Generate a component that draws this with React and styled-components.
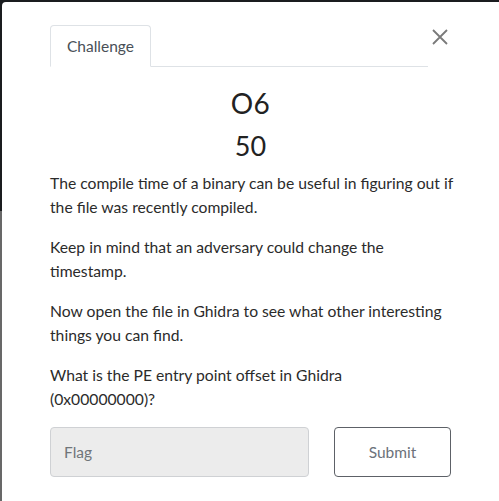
import React from "react";
import styled, { createGlobalStyle } from "styled-components";

const Global = createGlobalStyle`
  html, body { margin: 0; padding: 0; }
  body {
    width: 499px;
    height: 501px;
    overflow: hidden;
    font-family: Lato, "Open Sans", "Liberation Sans", sans-serif;
    background: linear-gradient(to bottom, #1a1c1f 0, #1a1c1f 211px, #686868 211px, #686868 100%);
  }
  * { box-sizing: border-box; }
`;

const Page = styled.div`
  padding: 2px 0 0 2px;
`;

const Modal = styled.div`
  width: 540px;
  height: 520px;
  background: #fff;
  border-radius: 4px 0 0 0;
  padding: 23px 89px 0 48px;
  display: flex;
  flex-direction: column;
`;

const Header = styled.div`
  display: flex;
  align-items: flex-start;
`;

const Tabs = styled.div`
  flex: 0 0 378px;
  display: flex;
  border-bottom: 1px solid #dee2e6;
`;

const Tab = styled.div`
  padding: 8px 16px;
  height: 42px;
  margin-bottom: -1px;
  border: 1px solid #dee2e6;
  border-bottom-color: #fff;
  border-radius: 4px 4px 0 0;
  color: #495057;
  font-size: 15.5px;
  line-height: 24px;
  background: #fff;
`;

const Close = styled.button`
  margin: 4px 0 0 4px;
  width: 16px;
  height: 16px;
  padding: 0;
  border: 0;
  background: none;
  display: flex;
  color: #7a7a7a;
`;

const Title = styled.h2`
  margin: 19px 0 0;
  width: 401px;
  text-align: center;
  font-size: 28px;
  font-weight: 400;
  line-height: 34px;
  color: #222;
  letter-spacing: 0.5px;
`;

const Value = styled.h3`
  margin: 9px 0 0;
  width: 401px;
  text-align: center;
  font-size: 27px;
  font-weight: 400;
  line-height: 34px;
  color: #222;
`;

const Description = styled.div`
  width: 405px;
  margin-top: 8px;
`;

const Para = styled.p`
  margin: 0 0 16px;
  max-width: ${(p) => (p.$narrow ? "398px" : "none")};
  font-size: 15.7px;
  line-height: 24px;
  color: #2b2b2b;
`;

const Form = styled.div`
  display: grid;
  grid-template-columns: 259px 117px;
  column-gap: 25px;
  width: 401px;
`;

const Input = styled.input`
  height: 50px;
  border: 1px solid #cfd1d4;
  border-radius: 4px;
  background: #ececec;
  padding: 0 13px;
  font-family: inherit;
  font-size: 15.5px;
  color: #495057;
  &::placeholder { color: #70757a; }
`;

const Button = styled.button`
  height: 50px;
  border: 1px solid #5d6167;
  border-radius: 4px;
  background: #fff;
  font-family: inherit;
  font-size: 15.5px;
  color: #6c727a;
`;

export default function App() {
  return (
    <>
      <Global />
      <Page>
        <Modal>
          <Header>
            <Tabs>
              <Tab>Challenge</Tab>
            </Tabs>
            <Close aria-label="Close">
              <svg width="16" height="16" viewBox="0 0 16 16">
                <path d="M1 1 L15 15 M15 1 L1 15" stroke="currentColor" strokeWidth="1.8" fill="none" />
              </svg>
            </Close>
          </Header>
          <Title>O6</Title>
          <Value>50</Value>
          <Description>
            <Para>The compile time of a binary can be useful in figuring out if the file was recently compiled.</Para>
            <Para>Keep in mind that an adversary could change the timestamp.</Para>
            <Para>Now open the file in Ghidra to see what other interesting things you can find.</Para>
            <Para $narrow>What is the PE entry point offset in Ghidra (0x00000000)?</Para>
          </Description>
          <Form>
            <Input placeholder="Flag" />
            <Button>Submit</Button>
          </Form>
        </Modal>
      </Page>
    </>
  );
}
